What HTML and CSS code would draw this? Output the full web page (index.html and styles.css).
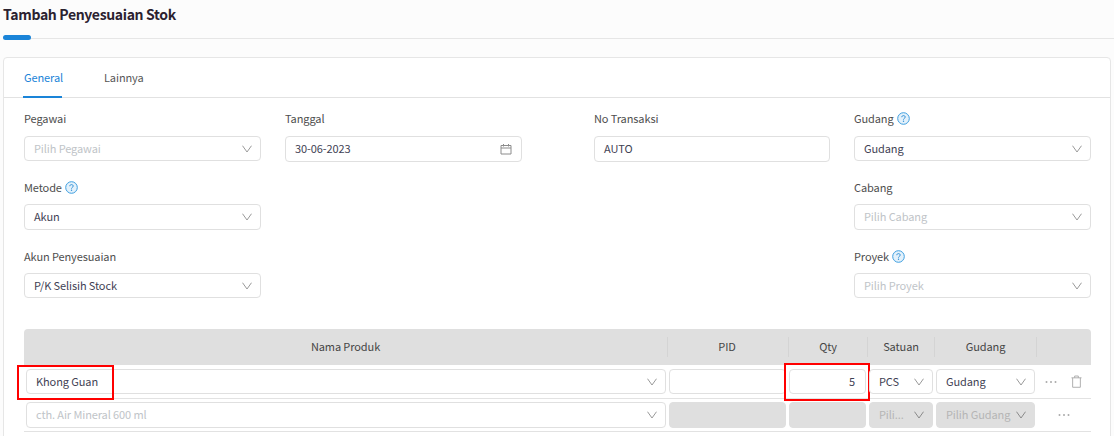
FILE: index.html
```html
<!DOCTYPE html>
<html lang="id">
<head>
<meta charset="utf-8">
<title>Tambah Penyesuaian Stok</title>
<link rel="stylesheet" href="styles.css">
</head>
<body>
<svg class="defs" width="0" height="0" aria-hidden="true">
  <symbol id="chev" viewBox="0 0 10 8"><path d="M.5.7 5 7 9.500.7" fill="none" stroke="currentColor" stroke-width="1"/></symbol>
  <symbol id="help" viewBox="0 0 13 13"><circle cx="6.500" cy="6.500" r="5.800" fill="#e3f1fb" stroke="#3f9fe0" stroke-width="1"/><path d="M4.800 5.200C4.800 4.200 5.500 3.600 6.500 3.600s1.700.6 1.700 1.500c0 1.300-1.700 1.300-1.700 2.500" fill="none" stroke="#2f8fd6" stroke-width="1"/><circle cx="6.500" cy="9.300" r=".7" fill="#2f8fd6"/></symbol>
  <symbol id="dots" viewBox="0 0 12 4"><circle cx="1.500" cy="2" r="1" fill="currentColor"/><circle cx="6" cy="2" r="1" fill="currentColor"/><circle cx="10.500" cy="2" r="1" fill="currentColor"/></symbol>
</svg>
<header class="page-head">
  <h1>Tambah Penyesuaian Stok</h1>
  <div class="head-rule"><span class="head-accent"></span></div>
</header>
<main class="card">
  <nav class="tabs">
    <a class="tab active">General</a>
    <a class="tab">Lainnya</a>
  </nav>
  <section class="form">
    <div class="field f-a">
      <label>Pegawai</label>
      <div class="select placeholder"><span>Pilih Pegawai</span><svg class="chev"><use href="#chev"/></svg></div>
    </div>
    <div class="field f-b">
      <label>Tanggal</label>
      <div class="input tall date"><span>30-06-2023</span>
        <svg class="cal" viewBox="0 0 12 12"><path d="M1 2.500h10v8.500H1zM1 5h10M3.500 1v2.500M8.500 1v2.500" fill="none" stroke="#8c8c8c" stroke-width="1"/></svg>
      </div>
    </div>
    <div class="field f-c">
      <label>No Transaksi</label>
      <div class="input tall"><span>AUTO</span></div>
    </div>
    <div class="field f-d">
      <label>Gudang <svg class="help"><use href="#help"/></svg></label>
      <div class="select"><span>Gudang</span><svg class="chev"><use href="#chev"/></svg></div>
    </div>
    <div class="field f-a r2">
      <label>Metode <svg class="help"><use href="#help"/></svg></label>
      <div class="select"><span>Akun</span><svg class="chev"><use href="#chev"/></svg></div>
    </div>
    <div class="field f-d r2">
      <label>Cabang</label>
      <div class="select placeholder"><span>Pilih Cabang</span><svg class="chev"><use href="#chev"/></svg></div>
    </div>
    <div class="field f-a r3">
      <label>Akun Penyesuaian</label>
      <div class="select"><span>P/K Selisih Stock</span><svg class="chev"><use href="#chev"/></svg></div>
    </div>
    <div class="field f-d r3">
      <label>Proyek <svg class="help"><use href="#help"/></svg></label>
      <div class="select placeholder"><span>Pilih Proyek</span><svg class="chev"><use href="#chev"/></svg></div>
    </div>
  </section>
  <section class="items">
    <div class="row thead">
      <div class="th">Nama Produk</div>
      <div class="th th-pid">PID</div>
      <div class="th">Qty</div>
      <div class="th">Satuan</div>
      <div class="th">Gudang</div>
      <div class="th last"></div>
    </div>
    <div class="row tbody">
      <div class="select cell c-name"><span>Khong Guan</span><svg class="chev"><use href="#chev"/></svg><i class="mark"></i></div>
      <div class="input cell c-pid"></div>
      <div class="input cell c-qty num"><span>5</span><i class="mark"></i></div>
      <div class="select cell"><span>PCS</span><svg class="chev"><use href="#chev"/></svg></div>
      <div class="select cell"><span>Gudang</span><svg class="chev"><use href="#chev"/></svg></div>
      <div class="actions"><svg class="dots"><use href="#dots"/></svg>
        <svg class="trash" viewBox="0 0 12 14"><path d="M.5 3h11M4 3V1h4v2M1.800 3v10.300h8.400V3" fill="none" stroke="#a8a8a8" stroke-width="1"/></svg>
      </div>
    </div>
    <div class="row tbody second">
      <div class="select cell c-name placeholder"><span>cth. Air Mineral 600 ml</span><svg class="chev"><use href="#chev"/></svg></div>
      <div class="input cell c-pid off"></div>
      <div class="input cell c-qty off"></div>
      <div class="select cell off"><span>Pili...</span><svg class="chev"><use href="#chev"/></svg></div>
      <div class="select cell off"><span>Pilih Gudang</span><svg class="chev"><use href="#chev"/></svg></div>
      <div class="actions solo"><svg class="dots"><use href="#dots"/></svg></div>
    </div>
  </section>
</main>
</body>
</html>
```
FILE: styles.css
```css
* { box-sizing: border-box; }
html, body { margin: 0; padding: 0; }
body {
  width: 1114px;
  height: 436px;
  overflow: hidden;
  background: #fcfcfc;
  color: #3f4254;
  font: 11px/16px "Noto Sans CJK SC", "Open Sans", sans-serif;
  letter-spacing: -.1px;
}
.defs { position: absolute; }
.page-head { padding-top: 4px; }
h1 {
  margin: 0 0 0 3px;
  height: 31px;
  font-size: 14px;
  line-height: 20px;
  font-weight: 700;
  color: #2b2230;
  letter-spacing: -.35px;
}
.head-rule {
  height: 4px;
  display: flex;
  align-items: flex-start;
  background: linear-gradient(#e6e6e6, #e6e6e6) 0 3px / 100% 1px no-repeat;
  margin-left: 3px;
}
.head-accent { width: 28px; height: 5px; border-radius: 3px; background: #1a84d8; }
.card {
  margin: 18px 3px 0;
  height: 400px;
  background: #fff;
  border: 1px solid #e6e6e6;
  border-radius: 4px 4px 0 0;
}
.tabs {
  display: flex;
  gap: 41px;
  height: 40px;
  padding-left: 19px;
  border-bottom: 1px solid #e2e2e2;
}
.tab { height: 40px; padding-left: 1px; line-height: 38px; color: #565656; }
.tab.active { width: 39px; white-space: nowrap; color: #1a84d8; border-bottom: 2px solid #1a84d8; }
.form {
  display: grid;
  grid-template-columns: 261px 309px 260px 237px;
  padding: 12px 0 0 20px;
}
.field { height: 69px; }
.f-a { grid-column: 1; padding-right: 24px; }
.f-b { grid-column: 2; padding-right: 72px; }
.f-c { grid-column: 3; padding-right: 24px; }
.f-d { grid-column: 4; }
.r2 { grid-row: 2; }
.r3 { grid-row: 3; }
label {
  display: flex;
  align-items: center;
  gap: 3px;
  height: 18px;
  margin-bottom: 8px;
  padding-bottom: 2px;
  color: #4e4e4e;
}
.r2 label, .r3 label { margin-bottom: 7px; }
.help { width: 13px; height: 13px; }
.select, .input {
  position: relative;
  display: flex;
  align-items: center;
  justify-content: space-between;
  height: 25px;
  padding: 0 8px 2px 9px;
  background: #fff;
  border: 1px solid #e0e0e0;
  border-radius: 4px;
  color: #3f4254;
}
.input.tall, .r2 .select { height: 26px; }
.date { padding-right: 9px; }
.chev { flex: none; width: 10px; height: 8px; margin-top: 2px; color: #9a9a9a; }
.cal { width: 12px; height: 12px; margin-top: 2px; }
.placeholder span { color: #c0c4c8; }
.items { margin: 12px 0 0 20px; width: 1067px; }
.row { display: grid; grid-template-columns: 644px 121px 79px 67px 102px 54px; }
.thead {
  height: 36px;
  align-items: center;
  background: #dfdfdf;
  border-radius: 4px 4px 0 0;
}
.th {
  height: 20px;
  line-height: 18px;
  text-align: center;
  color: #454545;
  border-right: 1px solid #d4d4d4;
}
.th-pid { padding-right: 2px; }
.th.last { border-right: 0; }
.tbody {
  align-items: start;
  height: 34px;
  padding-top: 4px;
  border-bottom: 1px solid #e2e2e2;
}
.tbody.second { height: 33px; padding-top: 3px; }
.second .cell { height: 26px; }
.cell { margin: 0 2px 0 1px; }
.c-name { margin: 0 2px; }
.c-pid { margin: 0 3px 0 1px; }
.c-qty { margin: 0 2px 0 0; }
.num { justify-content: flex-end; padding-right: 10px; }
.off { background: #dfdfdf; border-color: #dfdfdf; color: #b8b8b8; }
.off span { color: #b5b5b5; white-space: nowrap; }
.off .chev { color: #8a8a8a; }
.mark { position: absolute; border: 2px solid #f00; pointer-events: none; }
.c-name .mark { left: -10px; top: -5px; width: 97px; height: 35px; }
.num .mark { left: -6px; top: -7px; width: 86px; height: 38px; }
.actions { display: flex; align-items: center; gap: 14px; height: 25px; padding-left: 8px; color: #aaa; }
.actions.solo { padding-left: 21px; }
.dots { flex: none; width: 12px; height: 4px; }
.trash { flex: none; width: 11px; height: 13px; }
```
